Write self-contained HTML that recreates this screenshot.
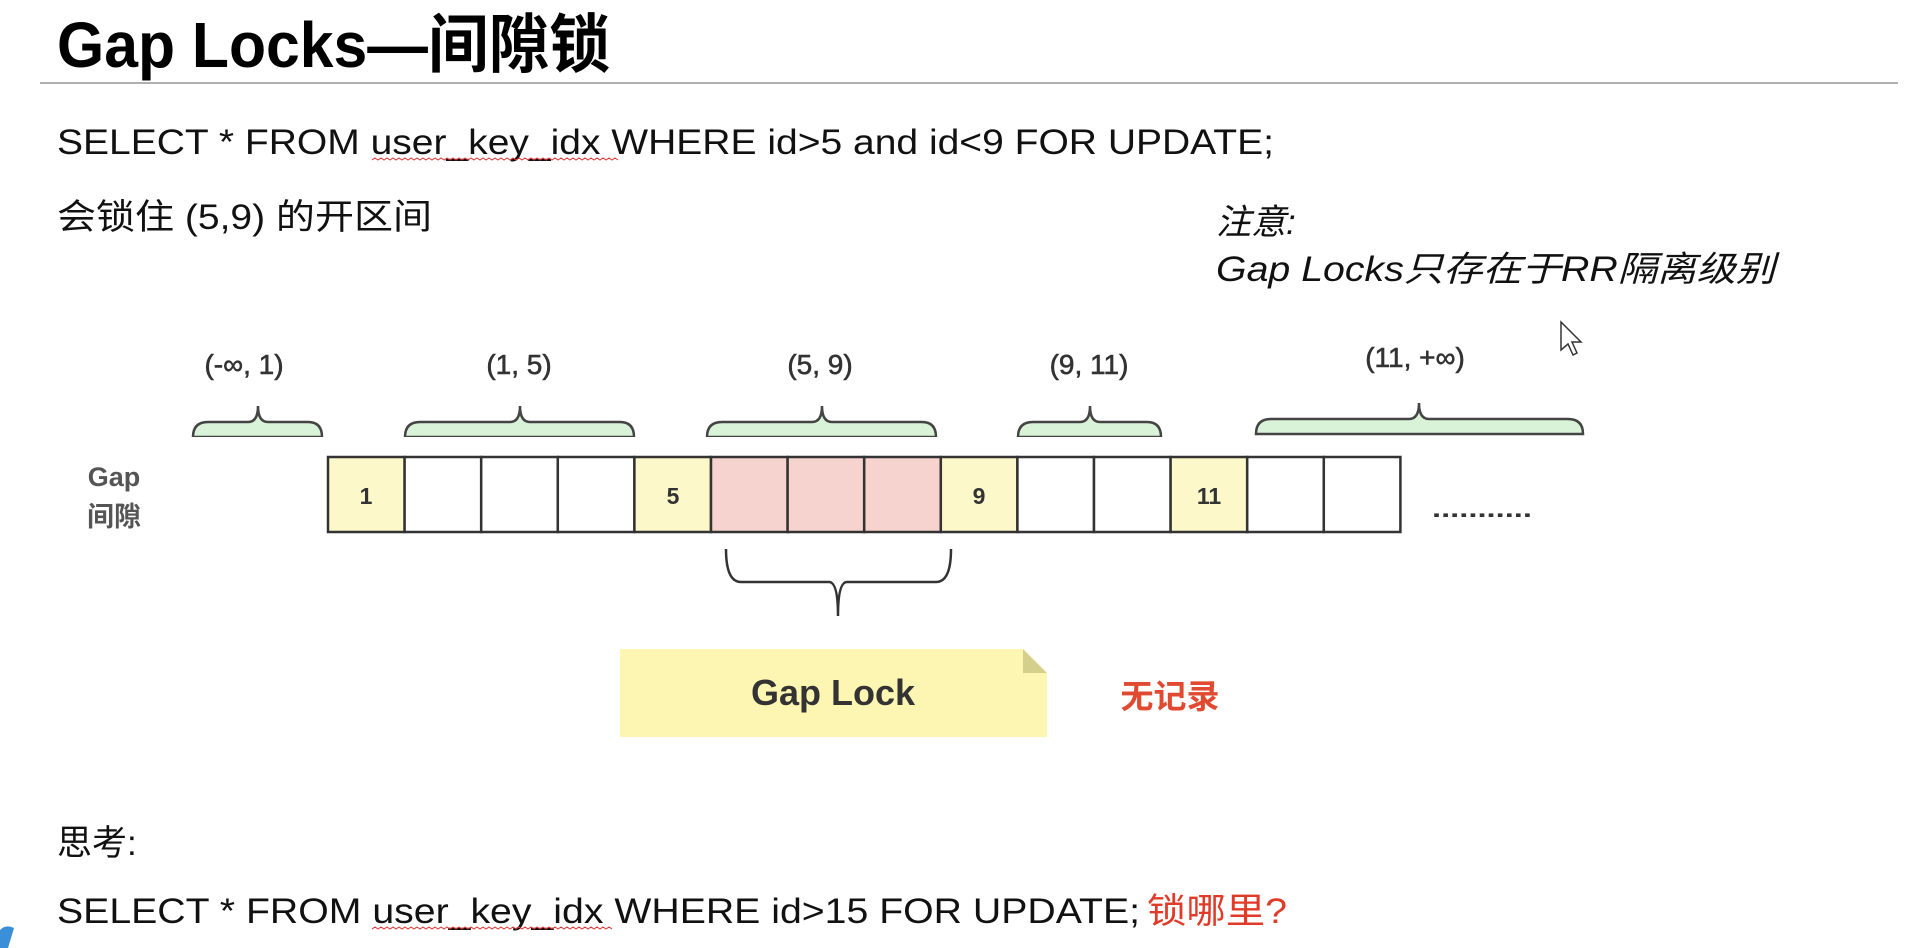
<!DOCTYPE html>
<html><head><meta charset="utf-8">
<style>
html,body{margin:0;padding:0;background:#fff;width:1912px;height:948px;overflow:hidden}
svg{display:block}
text{font-family:"Liberation Sans","Noto Sans CJK SC",sans-serif}
</style></head><body>
<svg width="1912" height="948" viewBox="0 0 1912 948" xmlns="http://www.w3.org/2000/svg">
<rect width="1912" height="948" fill="#fff"/>
<text x="57" y="67" font-size="64" font-weight="bold" fill="#000" textLength="553" lengthAdjust="spacingAndGlyphs">Gap Locks—间隙锁</text>
<line x1="40" y1="83" x2="1898" y2="83" stroke="#b0b0b0" stroke-width="2"/>
<text x="57" y="154" font-size="35" fill="#111" textLength="1217" lengthAdjust="spacingAndGlyphs">SELECT * FROM user_key_idx WHERE id&gt;5 and id&lt;9 FOR UPDATE;</text>
<path d="M372 160 l3 -2 l3 2 l3 -2 l3 2 l3 -2 l3 2 l3 -2 l3 2 l3 -2 l3 2 l3 -2 l3 2 l3 -2 l3 2 l3 -2 l3 2 l3 -2 l3 2 l3 -2 l3 2 l3 -2 l3 2 l3 -2 l3 2 l3 -2 l3 2 l3 -2 l3 2 l3 -2 l3 2 l3 -2 l3 2 l3 -2 l3 2 l3 -2 l3 2 l3 -2 l3 2 l3 -2 l3 2 l3 -2 l3 2 l3 -2 l3 2 l3 -2 l3 2 l3 -2 l3 2 l3 -2 l3 2 l3 -2 l3 2 l3 -2 l3 2 l3 -2 l3 2 l3 -2 l3 2 l3 -2 l3 2 l3 -2 l3 2 l3 -2 l3 2 l3 -2 l3 2 l3 -2 l3 2 l3 -2 l3 2 l3 -2 l3 2 l3 -2 l3 2 l3 -2 l3 2 l3 -2 l3 2 l3 -2 l3 2 l3 -2 l3 2" fill="none" stroke="#d33" stroke-width="1"/>
<text x="57" y="229" font-size="35" fill="#111" textLength="375" lengthAdjust="spacingAndGlyphs">会锁住 (5,9) 的开区间</text>
<text x="1216" y="234" font-size="35" font-style="italic" fill="#111">注意:</text>
<text x="1216" y="281" font-size="35" font-style="italic" fill="#111" textLength="559" lengthAdjust="spacingAndGlyphs">Gap Locks只存在于RR隔离级别</text>

<g font-size="28" fill="#333" text-anchor="middle" stroke="#333" stroke-width="0.6">
<text x="244" y="374">(-∞,  1)</text>
<text x="519" y="374">(1,  5)</text>
<text x="820" y="374">(5,  9)</text>
<text x="1089" y="374">(9,  11)</text>
<text x="1415" y="367">(11,  +∞)</text>
</g>
<g stroke="#444" stroke-width="2.5" fill="#d8f3d8">
<path d="M193 437 Q193 422 208 422 L248 422 Q258 422 258 406 Q258 422 268 422 L308 422 Q322 422 322 437 Z"/>
<path d="M405 437 Q405 422 420 422 L510 422 Q520 422 520 406 Q520 422 530 422 L620 422 Q634 422 634 437 Z"/>
<path d="M707 437 Q707 422 722 422 L812 422 Q822 422 822 406 Q822 422 832 422 L922 422 Q936 422 936 437 Z"/>
<path d="M1018 437 Q1018 422 1033 422 L1080 422 Q1090 422 1090 406 Q1090 422 1100 422 L1147 422 Q1161 422 1161 437 Z"/>
<path d="M1256 434 Q1256 419 1271 419 L1409 419 Q1419 419 1419 403 Q1419 419 1429 419 L1568 419 Q1583 419 1583 434 Z"/>
</g>
<g fill="#fff" stroke="none">
<rect x="150" y="437" width="1500" height="8"/>
</g>
<text x="114" y="486" font-size="27" font-weight="bold" fill="#555" text-anchor="middle">Gap</text>
<text x="114" y="526" font-size="27" font-weight="bold" fill="#555" text-anchor="middle">间隙</text>

<g stroke="#333" stroke-width="2.5">
<rect x="328" y="457" width="76.6" height="75" fill="#fdf8c9"/>
<rect x="404.6" y="457" width="76.6" height="75" fill="#fff"/>
<rect x="481.2" y="457" width="76.6" height="75" fill="#fff"/>
<rect x="557.8" y="457" width="76.6" height="75" fill="#fff"/>
<rect x="634.4" y="457" width="76.6" height="75" fill="#fdf8c9"/>
<rect x="711" y="457" width="76.6" height="75" fill="#f6d3cf"/>
<rect x="787.6" y="457" width="76.6" height="75" fill="#f6d3cf"/>
<rect x="864.2" y="457" width="76.6" height="75" fill="#f6d3cf"/>
<rect x="940.8" y="457" width="76.6" height="75" fill="#fdf8c9"/>
<rect x="1017.4" y="457" width="76.6" height="75" fill="#fff"/>
<rect x="1094" y="457" width="76.6" height="75" fill="#fff"/>
<rect x="1170.6" y="457" width="76.6" height="75" fill="#fdf8c9"/>
<rect x="1247.2" y="457" width="76.6" height="75" fill="#fff"/>
<rect x="1323.8" y="457" width="76.6" height="75" fill="#fff"/>
</g>
<g font-size="23" font-weight="bold" fill="#333" text-anchor="middle">
<text x="366" y="504">1</text>
<text x="673" y="504">5</text>
<text x="979" y="504">9</text>
<text x="1209" y="504">11</text>
</g>
<text x="1432" y="517" font-size="24" font-weight="bold" fill="#333" textLength="100" lengthAdjust="spacingAndGlyphs">...........</text>

<path d="M726 549 Q726 582 741 582 L829 582 Q838 582 838 616 Q838 582 847 582 L936 582 Q951 582 951 549" fill="none" stroke="#333" stroke-width="2.5"/>

<path d="M620 649 L1023 649 L1047 673 L1047 737 L620 737 Z" fill="#fdf6b3"/>
<path d="M1023 649 L1047 673 L1023 673 Z" fill="#d4cf8a"/>
<text x="833" y="705" font-size="36" font-weight="bold" fill="#333" text-anchor="middle">Gap Lock</text>
<text x="1170" y="708" font-size="33" font-weight="bold" fill="#e04a30" text-anchor="middle">无记录</text>

<text x="57" y="855" font-size="35" fill="#111">思考:</text>
<text x="57" y="923" font-size="35" fill="#111" textLength="1083" lengthAdjust="spacingAndGlyphs">SELECT * FROM user_key_idx WHERE id&gt;15 FOR UPDATE;</text>
<text x="1147" y="923" font-size="35" fill="#e03a28" textLength="140" lengthAdjust="spacingAndGlyphs">锁哪里?</text>
<path d="M372 929 l3 -2 l3 2 l3 -2 l3 2 l3 -2 l3 2 l3 -2 l3 2 l3 -2 l3 2 l3 -2 l3 2 l3 -2 l3 2 l3 -2 l3 2 l3 -2 l3 2 l3 -2 l3 2 l3 -2 l3 2 l3 -2 l3 2 l3 -2 l3 2 l3 -2 l3 2 l3 -2 l3 2 l3 -2 l3 2 l3 -2 l3 2 l3 -2 l3 2 l3 -2 l3 2 l3 -2 l3 2 l3 -2 l3 2 l3 -2 l3 2 l3 -2 l3 2 l3 -2 l3 2 l3 -2 l3 2 l3 -2 l3 2 l3 -2 l3 2 l3 -2 l3 2 l3 -2 l3 2 l3 -2 l3 2 l3 -2 l3 2 l3 -2 l3 2 l3 -2 l3 2 l3 -2 l3 2 l3 -2 l3 2 l3 -2 l3 2 l3 -2 l3 2 l3 -2 l3 2 l3 -2 l3 2 l3 -2 l3 2" fill="none" stroke="#d33" stroke-width="1"/>
<path d="M1561 322 L1561 350 L1568 344 L1573 355 L1577 353 L1572 342 L1581 342 Z" fill="#fff" stroke="#333" stroke-width="1.5"/>
<path d="M0 930 Q6 924 14 928 L8 948 L0 948 Z" fill="#3b8fd8"/>
</svg>
</body></html>
